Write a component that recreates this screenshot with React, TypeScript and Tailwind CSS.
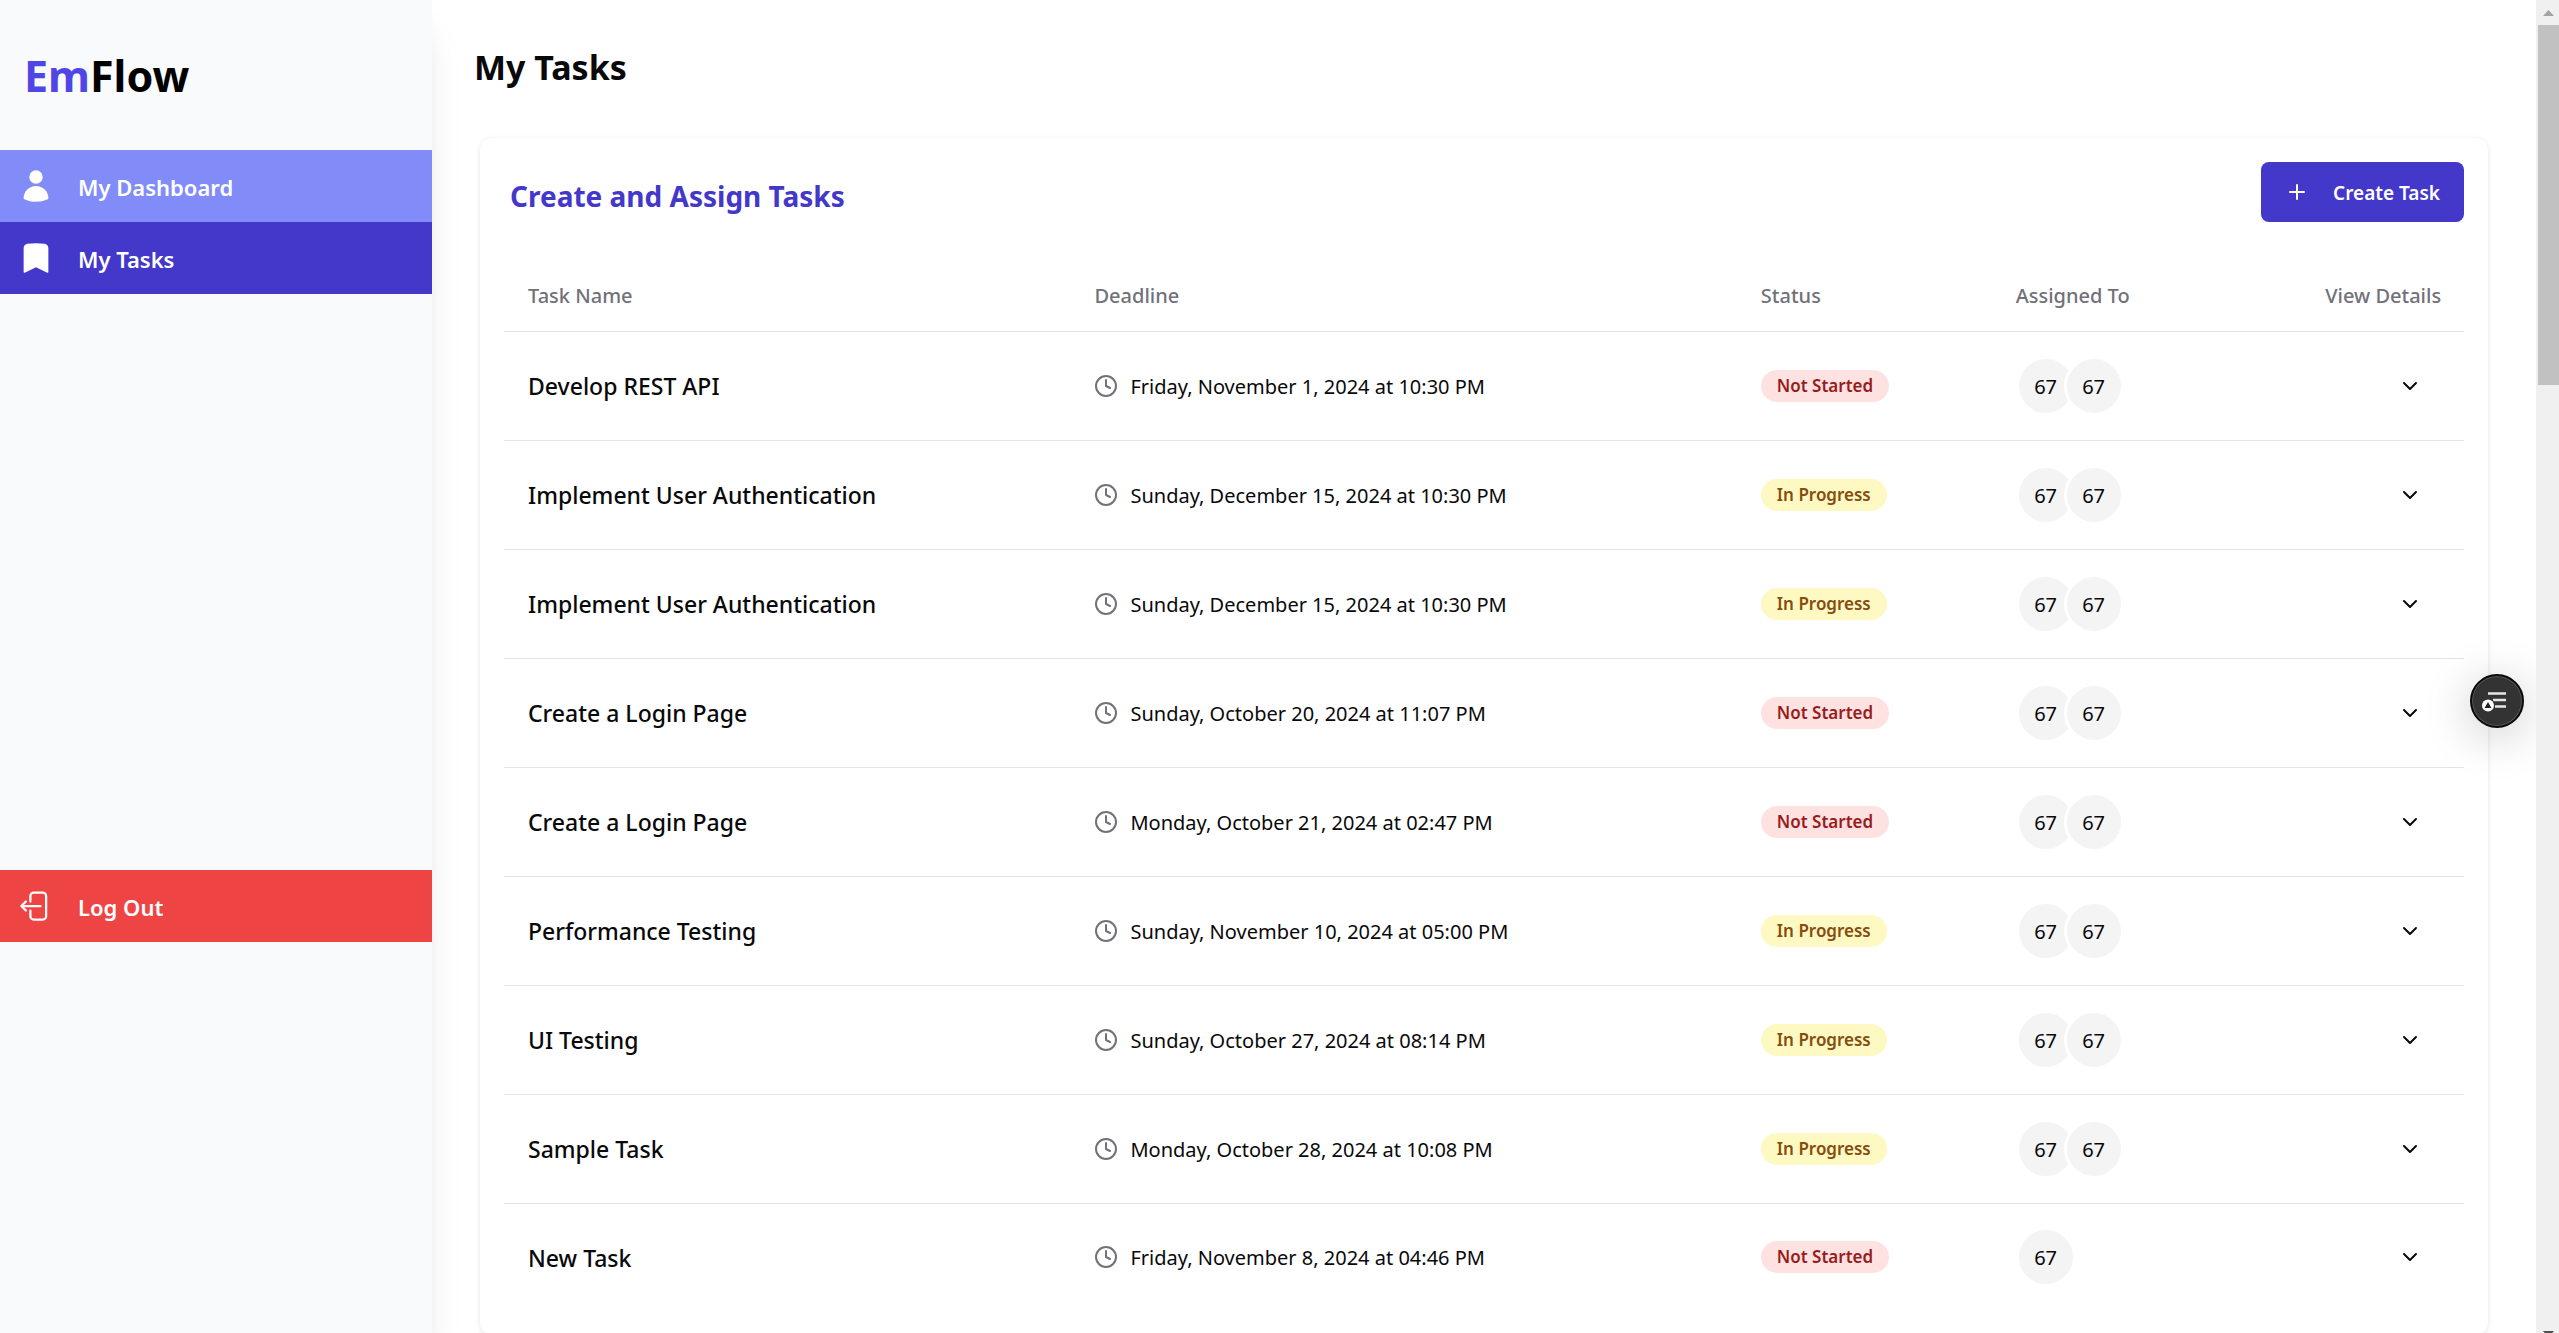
import { HiBookmark, HiUser } from "react-icons/hi2";
import { ChevronDown, Clock, Plus } from "lucide-react";

type Status = "Not Started" | "In Progress";

interface Task {
  name: string;
  deadline: string;
  status: Status;
  assignees: string[];
}

const tasks: Task[] = [
  { name: "Develop REST API", deadline: "Friday, November 1, 2024 at 10:30 PM", status: "Not Started", assignees: ["67", "67"] },
  { name: "Implement User Authentication", deadline: "Sunday, December 15, 2024 at 10:30 PM", status: "In Progress", assignees: ["67", "67"] },
  { name: "Implement User Authentication", deadline: "Sunday, December 15, 2024 at 10:30 PM", status: "In Progress", assignees: ["67", "67"] },
  { name: "Create a Login Page", deadline: "Sunday, October 20, 2024 at 11:07 PM", status: "Not Started", assignees: ["67", "67"] },
  { name: "Create a Login Page", deadline: "Monday, October 21, 2024 at 02:47 PM", status: "Not Started", assignees: ["67", "67"] },
  { name: "Performance Testing", deadline: "Sunday, November 10, 2024 at 05:00 PM", status: "In Progress", assignees: ["67", "67"] },
  { name: "UI Testing", deadline: "Sunday, October 27, 2024 at 08:14 PM", status: "In Progress", assignees: ["67", "67"] },
  { name: "Sample Task", deadline: "Monday, October 28, 2024 at 10:08 PM", status: "In Progress", assignees: ["67", "67"] },
  { name: "New Task", deadline: "Friday, November 8, 2024 at 04:46 PM", status: "Not Started", assignees: ["67"] },
];

const badgeStyles: Record<Status, string> = {
  "Not Started": "bg-[#fee2e2] text-[#991b1b]",
  "In Progress": "bg-[#fef9c3] text-[#854d0e]",
};

function LogOutIcon() {
  return (
    <svg viewBox="0 0 24 24" fill="none" stroke="currentColor" strokeWidth="1.5" strokeLinecap="round" strokeLinejoin="round" className="size-9 shrink-0" aria-hidden="true">
      <path d="M8.25 9V5.25A2.25 2.25 0 0 1 10.5 3h6a2.25 2.25 0 0 1 2.25 2.25v13.5A2.25 2.25 0 0 1 16.5 21h-6a2.25 2.25 0 0 1-2.25-2.25V15m-3 0-3-3m0 0 3-3m-3 3H15" />
    </svg>
  );
}

function Sidebar() {
  return (
    <aside className="relative z-10 flex w-108 shrink-0 flex-col bg-[#f9fafc] shadow-[0_30px_37px_-7px_rgba(0,0,0,0.1),0_12px_15px_-9px_rgba(0,0,0,0.1)]">
      <div className="flex h-[150px] items-center px-6 pt-0.5 text-[43px] font-bold">
        <span className="text-[#4f46e5]">Em</span>
        <span className="text-black">Flow</span>
      </div>
      <nav className="flex flex-col text-[22px] font-semibold text-white">
        <a href="#dashboard" className="flex h-18 items-center gap-6 bg-[#818cf8] px-4.5">
          <HiUser className="size-9 shrink-0" aria-hidden="true" />
          <span className="pt-0.5">My Dashboard</span>
        </a>
        <a href="#tasks" aria-current="page" className="flex h-18 items-center gap-6 bg-[#4338ca] px-4.5">
          <HiBookmark className="size-9 shrink-0" aria-hidden="true" />
          <span className="pt-0.5">My Tasks</span>
        </a>
      </nav>
      <button type="button" className="mt-144 flex h-18 items-center gap-6 bg-[#ef4444] px-4.5 text-[22px] font-semibold text-white">
        <LogOutIcon />
        <span className="pt-0.5">Log Out</span>
      </button>
    </aside>
  );
}

function TaskRow({ task }: { task: Task }) {
  return (
    <tr className="h-[109px] border-b border-[#e4e4e7] last:h-27 last:border-b-0">
      <td className="px-6 pt-0.5 text-[23px] font-medium">{task.name}</td>
      <td className="px-6">
        <div className="flex items-center gap-3">
          <Clock className="size-6 shrink-0 text-[#71717a]" aria-hidden="true" />
          <span className="pt-0.5">{task.deadline}</span>
        </div>
      </td>
      <td className="px-6">
        <span className={`inline-flex h-8 items-center rounded-full px-4 align-middle text-[17px] font-semibold whitespace-nowrap ${badgeStyles[task.status]}`}>
          {task.status}
        </span>
      </td>
      <td className="px-6">
        <div className="flex -space-x-3">
          {task.assignees.map((label, i) => (
            <span key={i} className="flex size-15 items-center justify-center rounded-full border-3 border-white bg-[#f4f4f5] pt-0.5">
              {label}
            </span>
          ))}
        </div>
      </td>
      <td className="px-6">
        <button type="button" aria-label={`View details of ${task.name}`} className="ml-auto flex h-13 w-15 items-center justify-center">
          <ChevronDown className="size-6" aria-hidden="true" />
        </button>
      </td>
    </tr>
  );
}

function TasksCard() {
  return (
    <section className="mx-12 rounded-xl bg-white p-6 shadow-[0_1px_5px_rgba(0,0,0,0.1),0_2px_3px_-2px_rgba(0,0,0,0.1)]">
      <div className="mb-9 flex items-center justify-between pl-1.5">
        <h2 className="pt-2 text-[28px] leading-10 font-bold text-[#4338ca]">Create and Assign Tasks</h2>
        <button type="button" className="flex h-15 items-center gap-6 rounded-lg bg-[#4338ca] px-6 text-[19px] font-semibold text-white">
          <Plus className="size-6" aria-hidden="true" />
          <span className="pt-0.5">Create Task</span>
        </button>
      </div>
      <table className="w-full table-fixed border-collapse text-left text-xl">
        <thead>
          <tr className="h-[73px] border-b border-[#e4e4e7] text-[#71717a]">
            <th className="w-[28.9%] px-6 pt-1 font-medium">Task Name</th>
            <th className="w-[34%] px-6 pt-1 font-medium">Deadline</th>
            <th className="w-[13%] px-6 pt-1 font-medium">Status</th>
            <th className="w-[15.8%] px-6 pt-1 font-medium">Assigned To</th>
            <th className="px-6 pt-1 text-right font-medium whitespace-nowrap">View Details</th>
          </tr>
        </thead>
        <tbody>
          {tasks.map((task, i) => (
            <TaskRow key={i} task={task} />
          ))}
        </tbody>
      </table>
    </section>
  );
}

function FloatingMenuButton() {
  return (
    <button
      type="button"
      aria-label="Open page tools"
      className="absolute top-[674px] right-3 flex size-13.5 items-center justify-center rounded-full border-2 border-[#0a0a0a] bg-[#333333] shadow-[0_8px_48px_rgba(0,0,0,0.22)] inset-ring inset-ring-[#5a5a5a]"
    >
      <svg viewBox="0 0 54 54" className="size-13.5 shrink-0" aria-hidden="true">
        <path d="M18 19.5h18M23 26h13M25 32.5h11" stroke="#e6e6e6" strokeWidth="2.4" />
        <circle cx="18" cy="31.5" r="7" fill="#333333" />
        <circle cx="18" cy="31.5" r="6" fill="#ffffff" />
        <path d="M18 28l3.4 6h-6.8z" fill="#1f1f1f" />
      </svg>
    </button>
  );
}

function ScrollTrack() {
  return (
    <div className="flex w-[23px] shrink-0 flex-col items-end overflow-hidden bg-[#f0f0f0]" aria-hidden="true">
      <svg viewBox="0 0 21 25" className="h-[25px] w-[21px] shrink-0">
        <path d="M5 16l5.5-6 5.5 6z" fill="#a3a3a3" />
      </svg>
      <div className="h-[27%] w-[21px] bg-[#c1c1c1]" />
      <svg viewBox="0 0 21 8" className="mt-auto -mb-1.5 h-2 w-[21px] shrink-0">
        <path d="M5 0h11l-5.5 6z" fill="#505050" />
      </svg>
    </div>
  );
}

export default function App() {
  return (
    <div className="flex h-screen overflow-hidden bg-white font-['Noto_Sans',sans-serif] text-[#09090b]">
      <Sidebar />
      <main className="relative min-w-0 flex-1 overflow-hidden">
        <h1 className="h-[138px] px-[42px] pt-10 text-[34px] leading-[54px] font-bold">My Tasks</h1>
        <TasksCard />
        <FloatingMenuButton />
      </main>
      <ScrollTrack />
    </div>
  );
}
